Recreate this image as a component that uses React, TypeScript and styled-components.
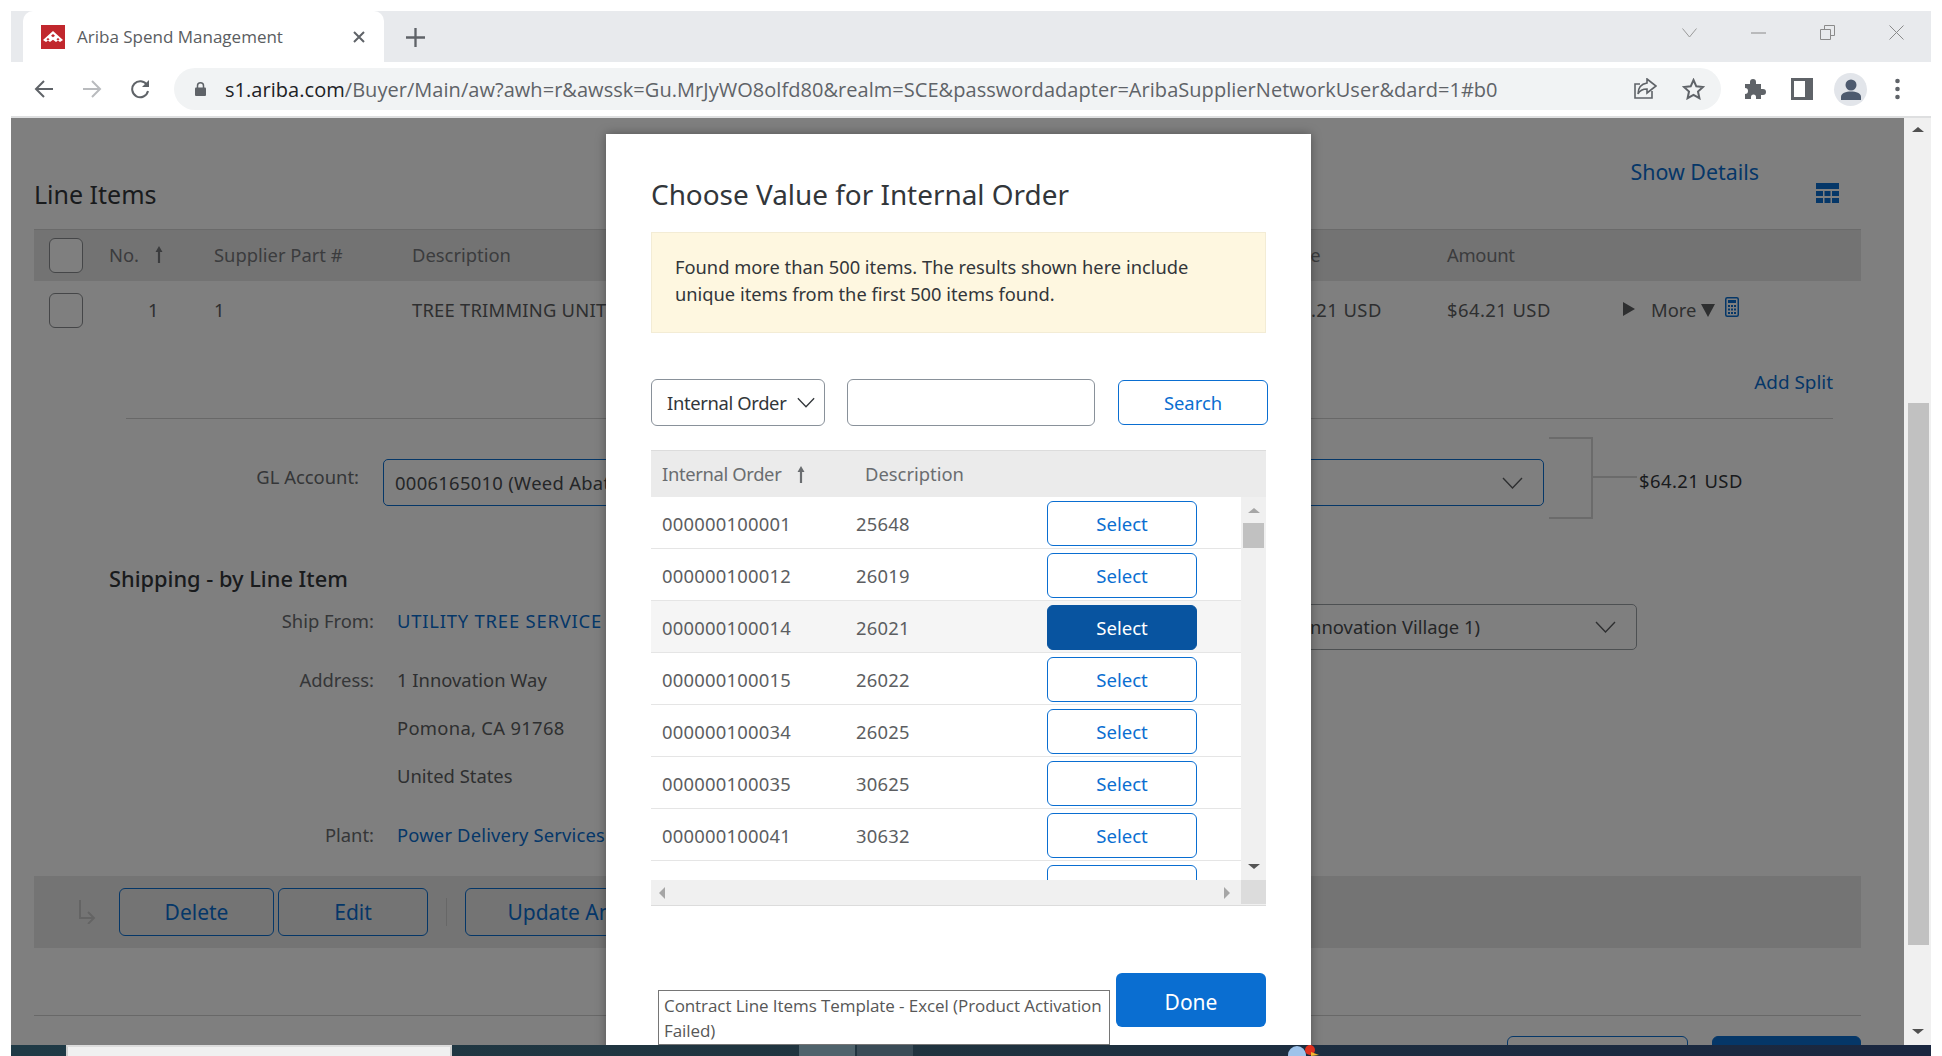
import React from "react";
import styled, { createGlobalStyle } from "styled-components";

const Global = createGlobalStyle`
  html, body { margin: 0; padding: 0; background: #fff; overflow: hidden; }
  * { box-sizing: border-box; }
  body { font-family: "Noto Sans", "Open Sans", sans-serif; }
`;

const Screen = styled.div`
  width: 1942px; height: 1056px; padding: 11px 11px 0; display: flex; flex-direction: column; overflow: hidden;
`;
const TabStrip = styled.div`
  height: 51px; background: #e8eaed; display: flex; align-items: flex-end; padding-left: 12px; flex: none;
`;
const Tab = styled.div`
  width: 361px; height: 51px; background: #fff; border-radius: 10px 10px 0 0; display: flex; align-items: center;
  padding: 0 19px 0 18px; color: #5f6368; font-family: "Open Sans", sans-serif; font-size: 17px;
`;
const Favicon = styled.svg`width: 24px; height: 24px; flex: none; margin-right: 12px;`;
const TabTitle = styled.span`flex: 1; white-space: nowrap; color: #5a5d61;`;
const NewTab = styled.svg`width: 19px; height: 19px; margin-left: 22px; margin-bottom: 15px; flex: none;`;
const WinControls = styled.div`
  margin-left: auto; display: flex; align-items: center; height: 100%; padding: 14px 27px 22px 0; gap: 54px;
`;
const Toolbar = styled.div`
  height: 56px; flex: none; background: #fff; border-bottom: 2px solid #dedfe0; display: flex; align-items: flex-start;
  padding: 6px 0 0 23px;
`;
const NavIcon = styled.svg<{ $gap?: number }>`
  width: 20px; height: 20px; margin: 11px ${p => p.$gap ?? 28}px 0 0; flex: none;
`;
const Omnibox = styled.div`
  width: 1547px; height: 42px; border-radius: 21px; background: #f1f3f4; display: flex; align-items: center; padding-left: 21px; margin-left: -4px;
`;
const Lock = styled.svg`width: 11px; height: 14px; margin-right: 19px; flex: none;`;
const Url = styled.span`
  font-family: "Open Sans", sans-serif; font-size: 20px; color: #5f6368; white-space: nowrap; letter-spacing: 0.04px; flex: 1; min-width: 0;
  b { font-weight: 400; color: #202124; }
`;
const OmniIcon = styled.svg<{ $m: number }>`width: 23px; height: 22px; flex: none; margin-right: ${p => p.$m}px;`;
const ToolIcon = styled.svg<{ $m: number; $w: number }>`
  width: ${p => p.$w}px; height: 22px; margin: 10px 0 0 ${p => p.$m}px; flex: none;
`;
const Avatar = styled.div`
  width: 33px; height: 33px; border-radius: 50%; background: #e2e5ea; margin: 5px 0 0 21px; flex: none; display: flex; align-items: flex-end; justify-content: center; padding-bottom: 6px;
`;
const Body = styled.div`height: 927px; flex: none; display: flex;`;
const Content = styled.div`
  position: relative; width: 1893px; height: 927px; overflow: hidden; background: #fff; padding: 0 43px 0 23px; color: #33363a; font-size: 18.4px; line-height: 28px;
`;
const Dim = styled.div`position: absolute; inset: 0; background: rgba(0,0,0,.5);`;

const SectionHead = styled.div`height: 111px; display: flex; align-items: flex-end; padding-bottom: 17px;`;
const SectionTitle = styled.div`font-size: 25px; line-height: 36px; color: #32363a;`;
const ShowDetails = styled.a`
  margin-left: auto; font-size: 21.4px; line-height: 30px; color: #0a6ed1; margin-bottom: 25px;
`;
const GridIcon = styled.svg`width: 23px; height: 20px; margin: 0 22px 9px 57px; flex: none;`;

const TableRow = styled.div<{ $head?: boolean }>`
  display: flex; align-items: center; height: ${p => (p.$head ? 52 : 58)}px;
  background: ${p => (p.$head ? "#e7e7e7" : "transparent")};
  border-top: ${p => (p.$head ? "1px solid #d4d4d4" : "none")};
  color: ${p => (p.$head ? "#77797c" : "#5c5e61")};
`;
const Cell = styled.div<{ $w: number; $pad?: number; $ls?: number; $up?: number }>`
  width: ${p => p.$w}px; flex: none; padding-left: ${p => p.$pad ?? 0}px; white-space: nowrap; display: flex; align-items: center;
  letter-spacing: ${p => p.$ls ?? 0}px; padding-bottom: ${p => p.$up ?? 0}px;
`;
const Check = styled.span`
  width: 34px; height: 35px; border: 1.5px solid #8a8d90; border-radius: 6px; margin-left: 15px; background: #fff; display: block;
`;
const SortArrow = styled.svg`width: 10px; height: 19px; margin-left: 15px;`;
const Triangle = styled.span`
  width: 0; height: 0; border-left: 12px solid #5c5e61; border-top: 7px solid transparent; border-bottom: 7px solid transparent; margin-right: 16px; margin-top: -2px;
`;
const CaretDown = styled.span`
  width: 0; height: 0; border-top: 13px solid #5c5e61; border-left: 7px solid transparent; border-right: 7px solid transparent; margin: 0 10px 0 5px;
`;
const Calc = styled.svg`width: 14px; height: 20px; margin-top: -6px;`;
const AddSplit = styled.a`
  display: block; text-align: right; margin: 29px 28px 0 0; color: #0a6ed1; font-size: 18.9px;
`;
const Rule = styled.div<{ $left?: number; $right?: number; $top: number }>`
  height: 1px; background: #d0d0d0; margin: ${p => p.$top}px ${p => p.$right ?? 0}px 0 ${p => p.$left ?? 0}px;
`;
const GLRow = styled.div`margin-top: 18px; height: 82px; display: flex; align-items: flex-start;`;
const FieldLabel = styled.div<{ $w: number; $top?: number; $gap: number }>`
  width: ${p => p.$w}px; flex: none; text-align: right; color: #6a6d70; margin: ${p => p.$top ?? 0}px ${p => p.$gap}px 0 0; white-space: nowrap;
`;
const SelectBox = styled.div`
  width: 1161px; height: 47px; margin-top: 22px; border: 1.5px solid #0a6ed1; border-radius: 5px; background: #fff; display: flex; align-items: center; padding: 0 20px 0 11px; color: #4a4d50;
  justify-content: space-between; white-space: nowrap; flex: none; letter-spacing: .3px;
`;
const Chevron = styled.svg`width: 21px; height: 12px; flex: none;`;
const SmallChevron = styled.svg`width: 18px; height: 11px; flex: none; margin-right: 0;`;
const Bracket = styled.div`
  width: 44px; height: 82px; margin-left: 5px; flex: none; position: relative;
  border: 2px solid #d6d6d6; border-left: none;
  &::after { content: ""; position: absolute; left: 100%; top: 37px; width: 46px; height: 2px; background: #d6d6d6; }
`;
const Total = styled.div`margin: 30px 0 0 46px; color: #33363a; letter-spacing: .45px;`;
const ShipTitle = styled.div`margin: 46px 0 0 75px; font-size: 21.8px; font-weight: 500; color: #32363a;`;
const FormRow = styled.div<{ $top: number }>`display: flex; align-items: flex-start; margin-top: ${p => p.$top}px;`;
const Value = styled.div<{ $link?: boolean; $ls?: number; $top?: number }>`
  color: ${p => (p.$link ? "#0a6ed1" : "#5c5e61")}; white-space: nowrap; letter-spacing: ${p => p.$ls ?? 0}px; margin-top: ${p => p.$top ?? 0}px;
`;
const ShipSelect = styled.div`
  width: 560px; height: 46px; margin: 0 224px 0 auto; border: 1.5px solid #9aa0a5; border-radius: 5px; background: #fff; display: flex; align-items: center; padding-right: 20px; color: #4a4d50; white-space: nowrap;
  span { margin-left: auto; }
  svg { margin-left: 115px; }
`;
const ActionBar = styled.div`
  height: 72px; margin-top: 27px; background: #e9e9e9; display: flex; align-items: center; padding-left: 44px; overflow: hidden;
`;
const ReturnIcon = styled.svg`width: 18px; height: 24px; margin-right: 23px; flex: none;`;
const OutlineBtn = styled.button<{ $w: number; $gap?: number }>`
  width: ${p => p.$w}px; height: 48px; flex: none; border: 1.5px solid #0a6ed1; border-radius: 6px; background: transparent;
  color: #0a6ed1; font: 400 21px "Noto Sans", sans-serif; margin-right: ${p => p.$gap ?? 0}px; padding: 0;
`;
const Sep = styled.span`width: 1px; height: 28px; background: #cfcfcf; margin-right: 18px; flex: none;`;
const BottomBtns = styled.div`display: flex; justify-content: flex-end; gap: 24px; margin-top: 20px;`;
const BottomBtn = styled.div<{ $w: number; $fill?: boolean }>`
  width: ${p => p.$w}px; height: 46px; border-radius: 6px; border: 1.5px solid #0a6ed1; background: ${p => (p.$fill ? "#0a6ed1" : "#fff")};
`;

const Modal = styled.div`
  position: absolute; left: 595px; top: 16px; width: 705px; height: 960px; background: #fff; padding: 42px 45px 0; box-shadow: 0 0 10px rgba(0,0,0,.35); color: #32363a;
`;
const ModalTitle = styled.div`font-size: 27.9px; line-height: 36px; color: #32363a;`;
const Notice = styled.div`
  margin-top: 20px; height: 101px; background: #fef7e0; border: 1px solid #f3ecd5; display: flex; align-items: center; padding: 0 0 5px 23px; font-size: 18.3px; line-height: 27px; color: #32363a;
`;
const SearchRow = styled.div`margin-top: 46px; height: 47px; display: flex; align-items: center;`;
const Dropdown = styled.div`
  width: 174px; height: 47px; border: 1.5px solid #89919a; border-radius: 6px; display: flex; align-items: center; justify-content: space-between; padding: 0 9px 0 15px; color: #32363a; font-size: 18.4px; flex: none; white-space: nowrap; letter-spacing: -.35px;
`;
const TextBox = styled.div`
  width: 248px; height: 47px; border: 1.5px solid #89919a; border-radius: 6px; margin: 0 23px 0 22px; flex: none;
`;
const SearchBtn = styled.button`
  width: 150px; height: 45px; border: 1.5px solid #0a6ed1; border-radius: 6px; background: #fff; color: #0a6ed1; font: 400 18.4px "Noto Sans", sans-serif; flex: none; padding: 0;
`;
const ResultHead = styled.div`
  margin-top: 24px; height: 47px; background: #ebebeb; border-top: 1.5px solid #dcdcdc; display: flex; align-items: center; color: #6a6d70; font-size: 18.4px; padding-left: 11px;
`;
const HeadId = styled.div`width: 203px; display: flex; align-items: center; letter-spacing: -.35px;`;
const ResultBody = styled.div`height: 383px; display: flex; overflow: hidden;`;
const Rows = styled.div`flex: 1; min-width: 0;`;
const ResultRow = styled.div<{ $hover?: boolean }>`
  height: 52px; display: flex; align-items: flex-start; padding: 4px 0 0 11px; border-bottom: 1.5px solid #e5e5e5; background: ${p => (p.$hover ? "#f5f5f5" : "#fff")}; color: #5c5e61; font-size: 18.4px;
`;
const RowText = styled.div<{ $w: number }>`width: ${p => p.$w}px; flex: none; line-height: 45px; letter-spacing: .22px;`;
const SelectBtn = styled.button<{ $active?: boolean }>`
  width: 150px; height: 45px; border: 1.5px solid ${p => (p.$active ? "#0854a0" : "#0a6ed1")}; border-radius: 6px; background: ${p => (p.$active ? "#0854a0" : "#fff")}; color: ${p => (p.$active ? "#fff" : "#0a6ed1")}; font: 400 18.6px "Noto Sans", sans-serif; flex: none; padding: 0;
`;
const VScroll = styled.div`width: 25px; flex: none; background: #f0f0f0; position: relative;`;
const ArrowUp = styled.span<{ $c: string; $w: number; $top: number }>`
  position: absolute; left: 50%; top: ${p => p.$top}px; transform: translateX(-50%); width: 0; height: 0; border-left: ${p => p.$w}px solid transparent; border-right: ${p => p.$w}px solid transparent; border-bottom: ${p => p.$w - 1}px solid ${p => p.$c};
`;
const ArrowDown = styled.span<{ $c: string; $w: number; $top: number }>`
  position: absolute; left: 50%; top: ${p => p.$top}px; transform: translateX(-50%); width: 0; height: 0; border-left: ${p => p.$w}px solid transparent; border-right: ${p => p.$w}px solid transparent; border-top: ${p => p.$w - 1}px solid ${p => p.$c};
`;
const ModalThumb = styled.div`position: absolute; left: 2px; top: 26px; width: 21px; height: 25px; background: #c1c1c1;`;
const HScroll = styled.div`
  height: 26px; background: #f0f0f0; border-bottom: 1.5px solid #dcdcdc; display: flex; align-items: center; padding-left: 8px; position: relative;
`;
const HLeft = styled.span`width: 0; height: 0; border-right: 6px solid #a6a6a6; border-top: 6px solid transparent; border-bottom: 6px solid transparent;`;
const HRight = styled.span`width: 0; height: 0; border-left: 6px solid #a6a6a6; border-top: 6px solid transparent; border-bottom: 6px solid transparent; margin-left: 559px;`;
const HCorner = styled.div`position: absolute; right: 0; top: 0; width: 25px; height: 24px; background: #dcdcdc;`;
const Footer = styled.div`display: flex; justify-content: flex-end; margin-top: 67px;`;
const DoneBtn = styled.button`
  width: 150px; height: 54px; background: #0a6ed1; border: none; border-radius: 6px; color: #fff; font: 400 21px "Noto Sans", sans-serif; padding: 3px 0 0;
`;
const Tooltip = styled.div`
  position: absolute; left: 52px; top: 856px; width: 452px; height: 55px; background: #fff; border: 1px solid #767676; padding: 2px 5px; font-family: "Open Sans", sans-serif; font-size: 17px; line-height: 25px; color: #575757; letter-spacing: -0.08px;
`;

const PageBar = styled.div`width: 27px; flex: none; background: #f0f0f0; position: relative;`;
const PageThumb = styled.div`position: absolute; left: 4px; top: 285px; width: 21px; height: 542px; background: #c1c1c1;`;

const Taskbar = styled.div`
  height: 11px; flex: none; background: linear-gradient(90deg, #1f3a46 0%, #20343f 45%, #1c2d40 70%, #1a2740 100%); display: flex; align-items: stretch; overflow: hidden; padding-left: 55px; position: relative;
`;
const TaskSearch = styled.div`width: 386px; background: #f0f0f0; border-top: 2px solid #dcdcdc; border-left: 2px solid #cfcfcf; border-right: 2px solid #cfcfcf; flex: none;`;
const TaskApp = styled.div<{ $bg: string; $ml: number }>`width: 56px; background: ${p => p.$bg}; margin-left: ${p => p.$ml}px; flex: none;`;
const TrayIcon = styled.svg`width: 34px; height: 11px; margin-left: 372px; flex: none;`;

const rows = [
  ["000000100001", "25648"],
  ["000000100012", "26019"],
  ["000000100014", "26021"],
  ["000000100015", "26022"],
  ["000000100034", "26025"],
  ["000000100035", "30625"],
  ["000000100041", "30632"],
];

const Chev = ({ c = "#5c5e61" }: { c?: string }) => (
  <Chevron viewBox="0 0 21 12"><path d="M1 1l9.5 10L20 1" fill="none" stroke={c} strokeWidth="1.4" /></Chevron>
);
const Sort = ({ c }: { c: string }) => (
  <SortArrow viewBox="0 0 10 19"><path d="M5 1L1.5 7h2.4v11h2.2V7h2.4z" fill={c} /></SortArrow>
);

export default function App() {
  return (
    <Screen>
      <Global />
      <TabStrip>
        <Tab>
          <Favicon viewBox="0 0 24 24">
            <rect width="24" height="24" fill="#c1272d" />
            <path d="M12 6l10 9-3 2-2-1.6-2 1.6-3-2.2L9 17l-2-1.6L5 17l-3-2z" fill="#fff" />
            <path d="M12 9l-2 1.8 2 1.4 2-1.4zM7 13l-1.6 1.3L7 15.5l1.6-1.2zM17 13l-1.6 1.3 1.6 1.2 1.6-1.2z" fill="#c1272d" />
          </Favicon>
          <TabTitle>Ariba Spend Management</TabTitle>
          <svg width="12" height="12" viewBox="0 0 12 12"><path d="M1 1l10 10M11 1L1 11" stroke="#5f6368" strokeWidth="2" /></svg>
        </Tab>
        <NewTab viewBox="0 0 18 18"><path d="M9 0v18M0 9h18" stroke="#5f6368" strokeWidth="2.2" /></NewTab>
        <WinControls>
          <svg width="15" height="10" viewBox="0 0 15 10"><path d="M.5.5l7 8.5 7-8.5" fill="none" stroke="#9a9a9a" /></svg>
          <svg width="15" height="2" viewBox="0 0 15 2"><path d="M0 1h15" stroke="#8a8a8a" /></svg>
          <svg width="15" height="15" viewBox="0 0 15 15"><path d="M.5 4.5h10v10H.5zM4.5 4V.5h10v10H11" fill="none" stroke="#8a8a8a" /></svg>
          <svg width="15" height="15" viewBox="0 0 15 15"><path d="M.5.5l14 14M14.5.5l-14 14" stroke="#8a8a8a" /></svg>
        </WinControls>
      </TabStrip>
      <Toolbar>
        <NavIcon viewBox="0 0 20 20"><path d="M19 10H2M10 2l-8 8 8 8" fill="none" stroke="#5f6368" strokeWidth="2" /></NavIcon>
        <NavIcon viewBox="0 0 20 20"><path d="M1 10h17M10 2l8 8-8 8" fill="none" stroke="#b9bbbe" strokeWidth="2" /></NavIcon>
        <NavIcon viewBox="0 0 20 20"><path d="M17 6A8 8 0 1 0 18 12" fill="none" stroke="#5f6368" strokeWidth="2" /><path d="M19 1v7h-7z" fill="#5f6368" /></NavIcon>
        <Omnibox>
          <Lock viewBox="0 0 11 14"><path d="M2.5 6V3.8a3 3 0 0 1 6 0V6" fill="none" stroke="#5f6368" strokeWidth="1.5" /><rect y="5.5" width="11" height="8.5" rx="1" fill="#5f6368" /></Lock>
          <Url><b>s1.ariba.com</b>/Buyer/Main/aw?awh=r&amp;awssk=Gu.MrJyWO8olfd80&amp;realm=SCE&amp;passwordadapter=AribaSupplierNetworkUser&amp;dard=1#b0</Url>
          <OmniIcon $m={25} viewBox="0 0 23 22"><path d="M18 13v7H1V6h5" fill="none" stroke="#5f6368" strokeWidth="1.6" /><path d="M13 1l9 7-9 7v-4c-4 0-7 1-9 5 0-6 3-10 9-11z" fill="none" stroke="#5f6368" strokeWidth="1.6" /></OmniIcon>
          <OmniIcon $m={16} viewBox="0 0 23 22"><path d="M11.5 2l2.8 6.3 6.7.7-5 4.5 1.4 6.7-5.9-3.4-5.9 3.4 1.4-6.7-5-4.5 6.7-.7z" fill="none" stroke="#5f6368" strokeWidth="2" /></OmniIcon>
        </Omnibox>
        <ToolIcon $m={23} $w={22} viewBox="0 0 22 22"><path d="M1 6h5V4a3 3 0 0 1 6 0v2h5v5h2a3 3 0 0 1 0 6h-2v4h-5v-2a2.500 2.500 0 0 0-5 0v2H1v-5a3 3 0 0 0 0-6z" fill="#5f6368" /></ToolIcon>
        <ToolIcon $m={25} $w={22} viewBox="0 0 22 22"><path d="M0 0h22v22H0zM3 3v16h11V3z" fill="#5f6368" fillRule="evenodd" /></ToolIcon>
        <Avatar>
          <svg width="20" height="21" viewBox="0 0 20 21"><circle cx="10" cy="6" r="5.500" fill="#4d5a6e" /><path d="M0 21v-3c0-4 5-5.500 10-5.500S20 14 20 18v3z" fill="#4d5a6e" /></svg>
        </Avatar>
        <ToolIcon $m={26} $w={9} viewBox="0 0 9 22"><circle cx="4.500" cy="3" r="2.300" fill="#5f6368" /><circle cx="4.500" cy="11" r="2.300" fill="#5f6368" /><circle cx="4.500" cy="19" r="2.300" fill="#5f6368" /></ToolIcon>
      </Toolbar>
      <Body>
        <Content>
          <SectionHead>
            <SectionTitle>Line Items</SectionTitle>
            <ShowDetails>Show Details</ShowDetails>
            <GridIcon viewBox="0 0 23 20"><path d="M0 0h23v6H0zM0 8h7v5H0zM8.500 8h6v5h-6zM16 8h7v5h-7zM0 15h7v5H0zM8.500 15h6v5h-6zM16 15h7v5h-7z" fill="#0a6ed1" /></GridIcon>
          </SectionHead>
          <TableRow $head>
            <Cell $w={75}><Check /></Cell>
            <Cell $w={105} $up={2}>No.<Sort c="#77797c" /></Cell>
            <Cell $w={198} $up={2}>Supplier Part #</Cell>
            <Cell $w={866} $up={2}>Description</Cell>
            <Cell $w={169} $up={2}>Price</Cell>
            <Cell $w={176} $up={2} $ls={-0.3}>Amount</Cell>
          </TableRow>
          <TableRow>
            <Cell $w={75}><Check /></Cell>
            <Cell $w={105} $pad={39}>1</Cell>
            <Cell $w={198}>1</Cell>
            <Cell $w={866} $ls={0.22}>TREE TRIMMING UNIT</Cell>
            <Cell $w={169} $ls={0.45}>$64.21 USD</Cell>
            <Cell $w={176} $ls={0.45}>$64.21 USD</Cell>
            <Cell $w={200}>
              <Triangle />More<CaretDown />
              <Calc viewBox="0 0 14 20"><rect x=".750" y=".750" width="12.500" height="18.500" rx="1.500" fill="none" stroke="#0a6ed1" strokeWidth="1.500" /><path d="M3 3h8v3H3zM3 8h2v2H3zM6 8h2v2H6zM9 8h2v2H9zM3 11.500h2v2H3zM6 11.500h2v2H6zM9 11.500h2v2H9zM3 15h2v2H3zM6 15h2v2H6zM9 15h2v2H9z" fill="#0a6ed1" /></Calc>
            </Cell>
          </TableRow>
          <AddSplit>Add Split</AddSplit>
          <Rule $top={22} $left={92} $right={28} />
          <GLRow>
            <FieldLabel $w={325} $top={26} $gap={24}>GL Account:</FieldLabel>
            <SelectBox>0006165010 (Weed Abatement)<Chev /></SelectBox>
            <Bracket />
            <Total>$64.21 USD</Total>
          </GLRow>
          <ShipTitle>Shipping - by Line Item</ShipTitle>
          <FormRow $top={11}>
            <FieldLabel $w={340} $top={3} $gap={23}>Ship From:</FieldLabel>
            <Value $link $ls={0.8} $top={3}>UTILITY TREE SERVICE</Value>
            <ShipSelect><span>(Innovation Village 1)</span><Chev /></ShipSelect>
          </FormRow>
          <FormRow $top={16}>
            <FieldLabel $w={340} $gap={23}>Address:</FieldLabel>
            <Value>1 Innovation Way</Value>
          </FormRow>
          <FormRow $top={20}>
            <FieldLabel $w={340} $gap={23} />
            <Value $ls={0.3}>Pomona, CA 91768</Value>
          </FormRow>
          <FormRow $top={20}>
            <FieldLabel $w={340} $gap={23} />
            <Value>United States</Value>
          </FormRow>
          <FormRow $top={31}>
            <FieldLabel $w={340} $gap={23}>Plant:</FieldLabel>
            <Value $link $ls={0.17}>Power Delivery Services</Value>
          </FormRow>
          <ActionBar>
            <ReturnIcon viewBox="0 0 18 24"><path d="M2 0v18h14M10 12l6 6-6 6" fill="none" stroke="#c9c9c9" strokeWidth="2" /></ReturnIcon>
            <OutlineBtn $w={155} $gap={4}>Delete</OutlineBtn>
            <OutlineBtn $w={150} $gap={18}>Edit</OutlineBtn>
            <Sep />
            <OutlineBtn $w={252}>Update Amounts</OutlineBtn>
          </ActionBar>
          <Rule $top={67} />
          <BottomBtns>
            <BottomBtn $w={181} />
            <BottomBtn $w={149} $fill />
          </BottomBtns>
          <Dim />
          <Modal>
            <ModalTitle>Choose Value for Internal Order</ModalTitle>
            <Notice>
              <div>Found more than 500 items. The results shown here include<br />unique items from the first 500 items found.</div>
            </Notice>
            <SearchRow>
              <Dropdown>Internal Order<SmallChevron viewBox="0 0 21 12"><path d="M1 1l9.500 10L20 1" fill="none" stroke="#32363a" strokeWidth="1.500" /></SmallChevron></Dropdown>
              <TextBox />
              <SearchBtn>Search</SearchBtn>
            </SearchRow>
            <ResultHead>
              <HeadId>Internal Order<Sort c="#6a6d70" /></HeadId>
              Description
            </ResultHead>
            <ResultBody>
              <Rows>
                {rows.map((r, i) => (
                  <ResultRow key={r[0]} $hover={i === 2}>
                    <RowText $w={194}>{r[0]}</RowText>
                    <RowText $w={191}>{r[1]}</RowText>
                    <SelectBtn $active={i === 2}>Select</SelectBtn>
                  </ResultRow>
                ))}
                <ResultRow>
                  <RowText $w={194} />
                  <RowText $w={191} />
                  <SelectBtn />
                </ResultRow>
              </Rows>
              <VScroll>
                <ArrowUp $c="#a6a6a6" $w={6} $top={11} />
                <ModalThumb />
                <ArrowDown $c="#555" $w={6} $top={367} />
              </VScroll>
            </ResultBody>
            <HScroll>
              <HLeft />
              <HRight />
              <HCorner />
            </HScroll>
            <Footer><DoneBtn>Done</DoneBtn></Footer>
            <Tooltip>Contract Line Items Template - Excel (Product Activation Failed)</Tooltip>
          </Modal>
        </Content>
        <PageBar>
          <ArrowUp $c="#505050" $w={6} $top={9} />
          <PageThumb />
          <ArrowDown $c="#505050" $w={6} $top={911} />
        </PageBar>
      </Body>
      <Taskbar>
        <TaskSearch />
        <TaskApp $bg="#4f636c" $ml={347} />
        <TaskApp $bg="#3a4c57" $ml={2} />
        <TrayIcon viewBox="0 0 34 11"><circle cx="12" cy="10" r="9" fill="#9ec3ea" /><circle cx="25" cy="5" r="5" fill="#e0301e" /><path d="M26 11l8-1-8-3z" fill="#f2b632" /></TrayIcon>
      </Taskbar>
    </Screen>
  );
}
